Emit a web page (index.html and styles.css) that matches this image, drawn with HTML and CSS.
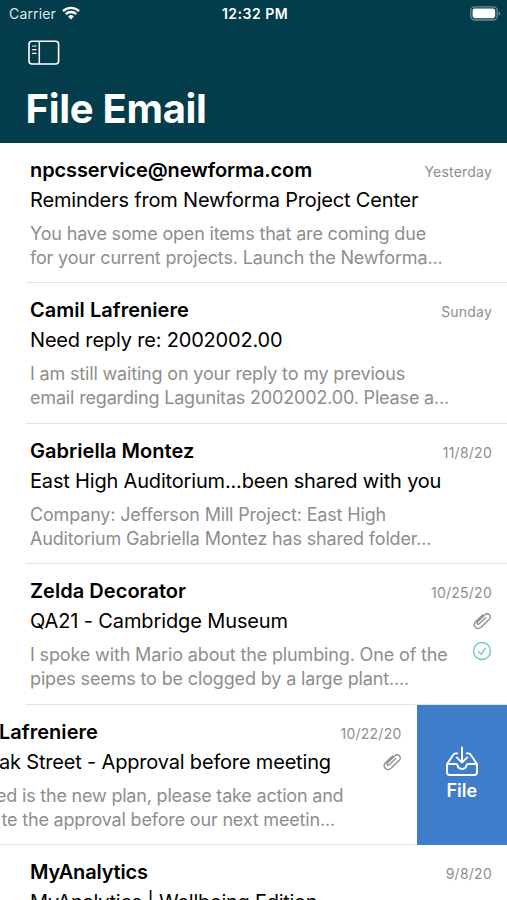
FILE: index.html
```html
<!DOCTYPE html>
<html lang="en">
<head>
<meta charset="utf-8">
<meta name="viewport" content="width=device-width">
<title>File Email</title>
<link rel="stylesheet" href="styles.css">
</head>
<body>
<svg class="defs" width="0" height="0" aria-hidden="true">
  <symbol id="clip" viewBox="0 0 20 20">
    <path d="M13.7 6.6L7.5 12.500C5.700 14.200 4 12.300 5.600 10.700L12.600 3.900C16 .9 20.300 5 17.300 8.200L9.300 16C5 20-.2 14.900 3.500 10.800L10.600 3.900"/>
  </symbol>
</svg>
<header class="header">
  <div class="status">
    <div class="carrier">Carrier
      <svg class="wifi" width="18" height="14" viewBox="0 0 18 14"><path d="M1 5.1a11.6 11.6 0 0 1 16 0M3.8 8.1a7.5 7.5 0 0 1 10.4 0" fill="none" stroke="#fff" stroke-width="2.4"/><path d="M6.1 10.5a4.2 4.2 0 0 1 5.8 0L9 13.4z" fill="#fff"/></svg>
    </div>
    <time class="clock">12:32 PM</time>
    <svg class="battery" width="31" height="15" viewBox="0 0 31 15"><rect x=".8" y=".8" width="26.4" height="13.2" rx="3.9" fill="none" stroke="#6d8f99" stroke-width="1.3"/><path d="M28.6 5.3q1.5.7 1.5 2.1t-1.5 2.1z" fill="#6d8f99"/><rect x="2.6" y="2.6" width="22.6" height="9.6" rx="2.1" fill="#fff"/></svg>
  </div>
  <svg class="sidebar" width="32" height="26" viewBox="0 0 32 26"><g fill="none" stroke="#fff"><rect x="1" y="1.2" width="29.6" height="22.8" rx="3" stroke-width="1.6"/><path d="M11.3 1.2V24" stroke-width="1.5"/><path d="M4.6 6h3.4M4.6 9.7h3.4M4.6 13.4h3.4" stroke-width="1.2" stroke-linecap="round"/></g></svg>
  <h1 class="title">File Email</h1>
</header>
<main class="list">
  <article class="mail">
    <div class="line"><h2 class="name address">npcsservice@newforma.com</h2><time class="date">Yesterday</time></div>
    <div class="line"><p class="subject">Reminders from Newforma Project Center</p></div>
    <p class="preview">You have some open items that are coming due<br>for your current projects. Launch the Newforma...</p>
  </article>
  <article class="mail">
    <div class="line"><h2 class="name">Camil Lafreniere</h2><time class="date">Sunday</time></div>
    <div class="line"><p class="subject">Need reply re: 2002002.00</p></div>
    <p class="preview">I am still waiting on your reply to my previous<br>email regarding Lagunitas 2002002.00. Please a...</p>
  </article>
  <article class="mail">
    <div class="line"><h2 class="name">Gabriella Montez</h2><time class="date numeric">11/8/20</time></div>
    <div class="line"><p class="subject">East High Auditorium...been shared with you</p></div>
    <p class="preview">Company: Jefferson Mill Project: East High<br>Auditorium Gabriella Montez has shared folder...</p>
  </article>
  <article class="mail">
    <div class="line"><h2 class="name">Zelda Decorator</h2><time class="date numeric">10/25/20</time></div>
    <div class="line"><p class="subject museum">QA21 - Cambridge Museum</p><svg class="clip" width="20" height="20"><use href="#clip"/></svg></div>
    <div class="body">
      <p class="preview plumbing">I spoke with Mario about the plumbing. One of the<br>pipes seems to be clogged by a large plant....</p>
      <svg class="filed" width="20" height="20" viewBox="0 0 20 20"><g fill="none" stroke="#67cdc4" stroke-width="1.4" stroke-linecap="round" stroke-linejoin="round"><circle cx="10" cy="10" r="8.5"/><path d="M6.5 10.4l2.7 2.8 4.3-6"/></g></svg>
    </div>
  </article>
  <div class="swipe">
    <article class="mail slid">
      <div class="line"><h2 class="name">Lafreniere</h2><time class="date numeric">10/22/20</time></div>
      <div class="line"><p class="subject">ak Street - Approval before meeting</p><svg class="clip" width="20" height="20"><use href="#clip"/></svg></div>
      <p class="preview"><span class="cut">ed is the new plan, please take action and</span><br><span class="tail">te the approval before our next meetin...</span></p>
    </article>
    <div class="action">
      <svg width="34" height="32" viewBox="0 0 34 32"><g fill="none" stroke="#fff" stroke-width="1.9" stroke-linecap="round" stroke-linejoin="round"><path d="M17 1.500v14.700M11.700 11.400l5.300 5.200 5.300-5.200"/><path d="M12.300 7.400h-1.500q-1.800 0-2.700 1.500L2.600 17.200Q2 18.200 2 19.500v6.800q0 2.700 2.700 2.700h24.600q2.700 0 2.700-2.700v-6.800q0-1.300-.6-2.300L25.900 8.900q-.9-1.500-2.700-1.500h-1.500"/><path d="M2.400 18h8.600q1.300 0 1.500 1.300a4.600 4.600 0 0 0 9 0q.2-1.300 1.500-1.300h8.600"/></g></svg>
      <span class="action-label">File</span>
    </div>
  </div>
  <article class="mail">
    <div class="line"><h2 class="name tight">MyAnalytics</h2><time class="date numeric">9/8/20</time></div>
    <div class="line"><p class="subject edition">MyAnalytics | Wellbeing Edition</p></div>
  </article>
</main>
</body>
</html>
```
FILE: styles.css
```css
* { box-sizing: border-box; margin: 0; padding: 0; }
html, body { height: 100%; overflow: hidden; }
body {
  background: #fff;
  color: #000;
  font-family: Inter, "Liberation Sans", sans-serif;
  display: flex;
  flex-direction: column;
}
svg { display: block; flex: none; }
.defs { position: absolute; }

.header { flex: none; height: 142.5px; background: #033d4b; color: #fff; overflow: hidden; }
.status {
  display: grid;
  grid-template-columns: 1fr auto 1fr;
  align-items: center;
  height: 28px;
  padding: 0 6px 0 9px;
  font-size: 14px;
  line-height: 28px;
}
.carrier { display: flex; align-items: center; gap: 6px; color: #dce5e8; letter-spacing: .15px; }
.wifi { margin-top: -2px; }
.clock { font-weight: 600; letter-spacing: .5px; }
.battery { justify-self: end; margin-top: -2px; }
.sidebar { margin: 11.500px 0 0 27.500px; }
.title {
  margin: 18.500px 0 0 25.500px;
  font-size: 40px;
  line-height: 50px;
  font-weight: 700;
  letter-spacing: -.3px;
}

.list { flex: 1; min-height: 0; overflow: hidden; }
.mail {
  height: 140.5px;
  margin-left: 26px;
  padding: 12.2px 15px 0 4px;
  border-bottom: 1px solid #e4e4e4;
  white-space: nowrap;
}
.line { display: flex; justify-content: space-between; align-items: baseline; height: 30px; line-height: 30px; }
.name { font-size: 20px; font-weight: 600; letter-spacing: .04px; }
.address { letter-spacing: -.11px; }
.tight { letter-spacing: -.17px; }
.subject { font-size: 20px; letter-spacing: -.18px; }
.museum { letter-spacing: -.12px; }
.edition { letter-spacing: -.26px; }
.date { font-size: 14px; color: #8e8e8e; letter-spacing: .2px; }
.numeric { letter-spacing: .25px; }
.preview { margin-top: 7px; font-size: 18px; line-height: 24.3px; letter-spacing: -.17px; color: #8e8e8e; }
.plumbing { letter-spacing: -.145px; }
.clip { align-self: center; fill: none; stroke: #8e8e8e; stroke-width: 1.35; stroke-linecap: round; stroke-linejoin: round; }
.body { display: flex; justify-content: space-between; align-items: flex-start; }
.filed { margin-top: 5px; }

.swipe { display: flex; height: 140.5px; overflow: hidden; }
.slid { flex: 1; min-width: 0; margin-left: 0; padding-left: 0; overflow: hidden; }
.slid .name { margin-left: -1px; }
.slid .subject { margin-left: -1px; }
.cut { margin-left: -4px; letter-spacing: -.2px; }
.tail { margin-left: 1.500px; letter-spacing: -.18px; }
.action {
  width: 90.500px;
  background: #3f7dcb;
  color: #fff;
  display: flex;
  flex-direction: column;
  align-items: center;
  padding-top: 41px;
}
.action-label { margin-top: 1px; font-size: 18px; line-height: 24px; font-weight: 600; }
```
